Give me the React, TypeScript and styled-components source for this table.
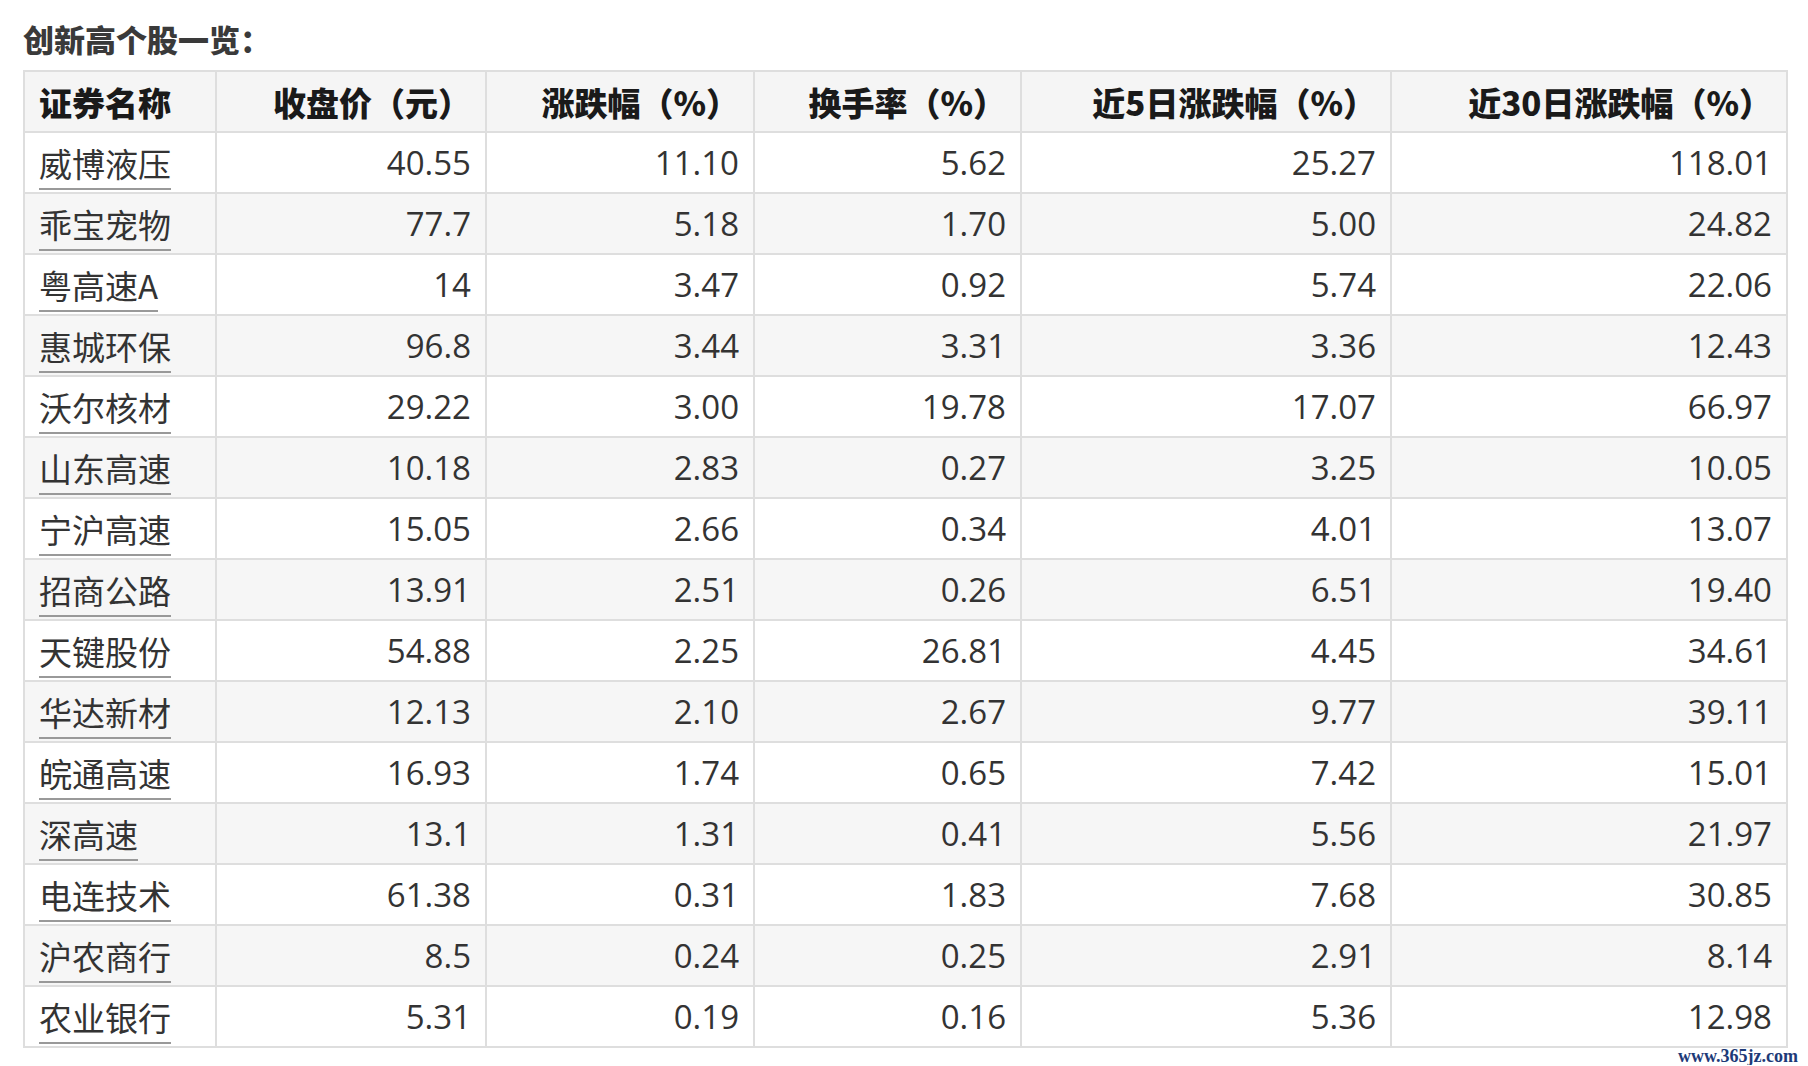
import styled, { createGlobalStyle } from "styled-components";

const GlobalStyle = createGlobalStyle`
	html, body {
		margin: 0;
		padding: 0;
		background: #fff;
	}
	body {
		font-family: "Open Sans", "Noto Sans CJK SC", sans-serif;
		color: #333;
	}
`;

const rows: [string, string, string, string, string, string][] = [
	["威博液压", "40.55", "11.10", "5.62", "25.27", "118.01"],
	["乖宝宠物", "77.7", "5.18", "1.70", "5.00", "24.82"],
	["粤高速A", "14", "3.47", "0.92", "5.74", "22.06"],
	["惠城环保", "96.8", "3.44", "3.31", "3.36", "12.43"],
	["沃尔核材", "29.22", "3.00", "19.78", "17.07", "66.97"],
	["山东高速", "10.18", "2.83", "0.27", "3.25", "10.05"],
	["宁沪高速", "15.05", "2.66", "0.34", "4.01", "13.07"],
	["招商公路", "13.91", "2.51", "0.26", "6.51", "19.40"],
	["天键股份", "54.88", "2.25", "26.81", "4.45", "34.61"],
	["华达新材", "12.13", "2.10", "2.67", "9.77", "39.11"],
	["皖通高速", "16.93", "1.74", "0.65", "7.42", "15.01"],
	["深高速", "13.1", "1.31", "0.41", "5.56", "21.97"],
	["电连技术", "61.38", "0.31", "1.83", "7.68", "30.85"],
	["沪农商行", "8.5", "0.24", "0.25", "2.91", "8.14"],
	["农业银行", "5.31", "0.19", "0.16", "5.36", "12.98"],
];

const headers = ["证券名称", "收盘价（元）", "涨跌幅（%）", "换手率（%）", "近5日涨跌幅（%）", "近30日涨跌幅（%）"];
const widths = [192, 270, 268, 267, 370, 396];

const App = () => {
	return (
		<Page>
			<GlobalStyle />
			<Title>创新高个股一览：</Title>
			<Table>
				<colgroup>
					{widths.map((w, i) => (
						<col key={i} style={{ width: w }} />
					))}
				</colgroup>
				<thead>
					<Row>
						{headers.map((h, i) => (
							<HeadCell key={h} align={i === 0 ? "left" : "right"}>
								{h}
							</HeadCell>
						))}
					</Row>
				</thead>
				<tbody>
					{rows.map((r, i) => (
						<Row key={r[0]} striped={i % 2 === 1}>
							<Cell align="left">
								<StockLink href="#">{r[0]}</StockLink>
							</Cell>
							{r.slice(1).map((v, j) => (
								<Cell key={j} align="right">
									{v}
								</Cell>
							))}
						</Row>
					))}
				</tbody>
			</Table>
			<Footer>
				<Watermark>www.365jz.com</Watermark>
			</Footer>
		</Page>
	);
};

const Page = styled.div`
	padding: 18px 22px 0 23px;
	width: 1808px;
	box-sizing: border-box;
`;

const Title = styled.h3`
	margin: 0 0 10px 0;
	font-size: 31px;
	line-height: 42px;
	font-weight: 900;
	color: #3a3a3a;
	font-family: "Noto Sans CJK SC", sans-serif;
`;

const Table = styled.table`
	border-collapse: collapse;
	table-layout: fixed;
	width: 1763px;
	font-size: 33px;
`;

const Row = styled.tr<{ striped?: boolean }>`
	background: ${({ striped }) => (striped ? "#f6f6f6" : "#fff")};
	height: 61px;
`;

const HeadCell = styled.th<{ align: "left" | "right" }>`
	background: #f5f5f5;
	border: 2px solid #dedede;
	padding: 0 14px;
	text-align: ${({ align }) => align};
	font-weight: 900;
	color: #1a1a1a;
	font-family: "Noto Sans CJK SC", sans-serif;
	white-space: nowrap;
`;

const Cell = styled.td<{ align: "left" | "right" }>`
	border: 2px solid #dedede;
	padding: 0 14px;
	text-align: ${({ align }) => align};
	color: #333;
	white-space: nowrap;
`;

const StockLink = styled.a`
	color: #333;
	text-decoration: none;
	border-bottom: 2px solid #999;
	font-family: "Noto Sans CJK SC", sans-serif;
	padding-bottom: 1px;
`;

const Footer = styled.div`
	display: flex;
	justify-content: flex-end;
	width: 1775px;
`;

const Watermark = styled.span`
	font-family: "Liberation Serif", serif;
	font-weight: bold;
	font-size: 18px;
	color: #1d3a78;
	line-height: 18px;
	margin-top: -1px;
`;

export default App;
